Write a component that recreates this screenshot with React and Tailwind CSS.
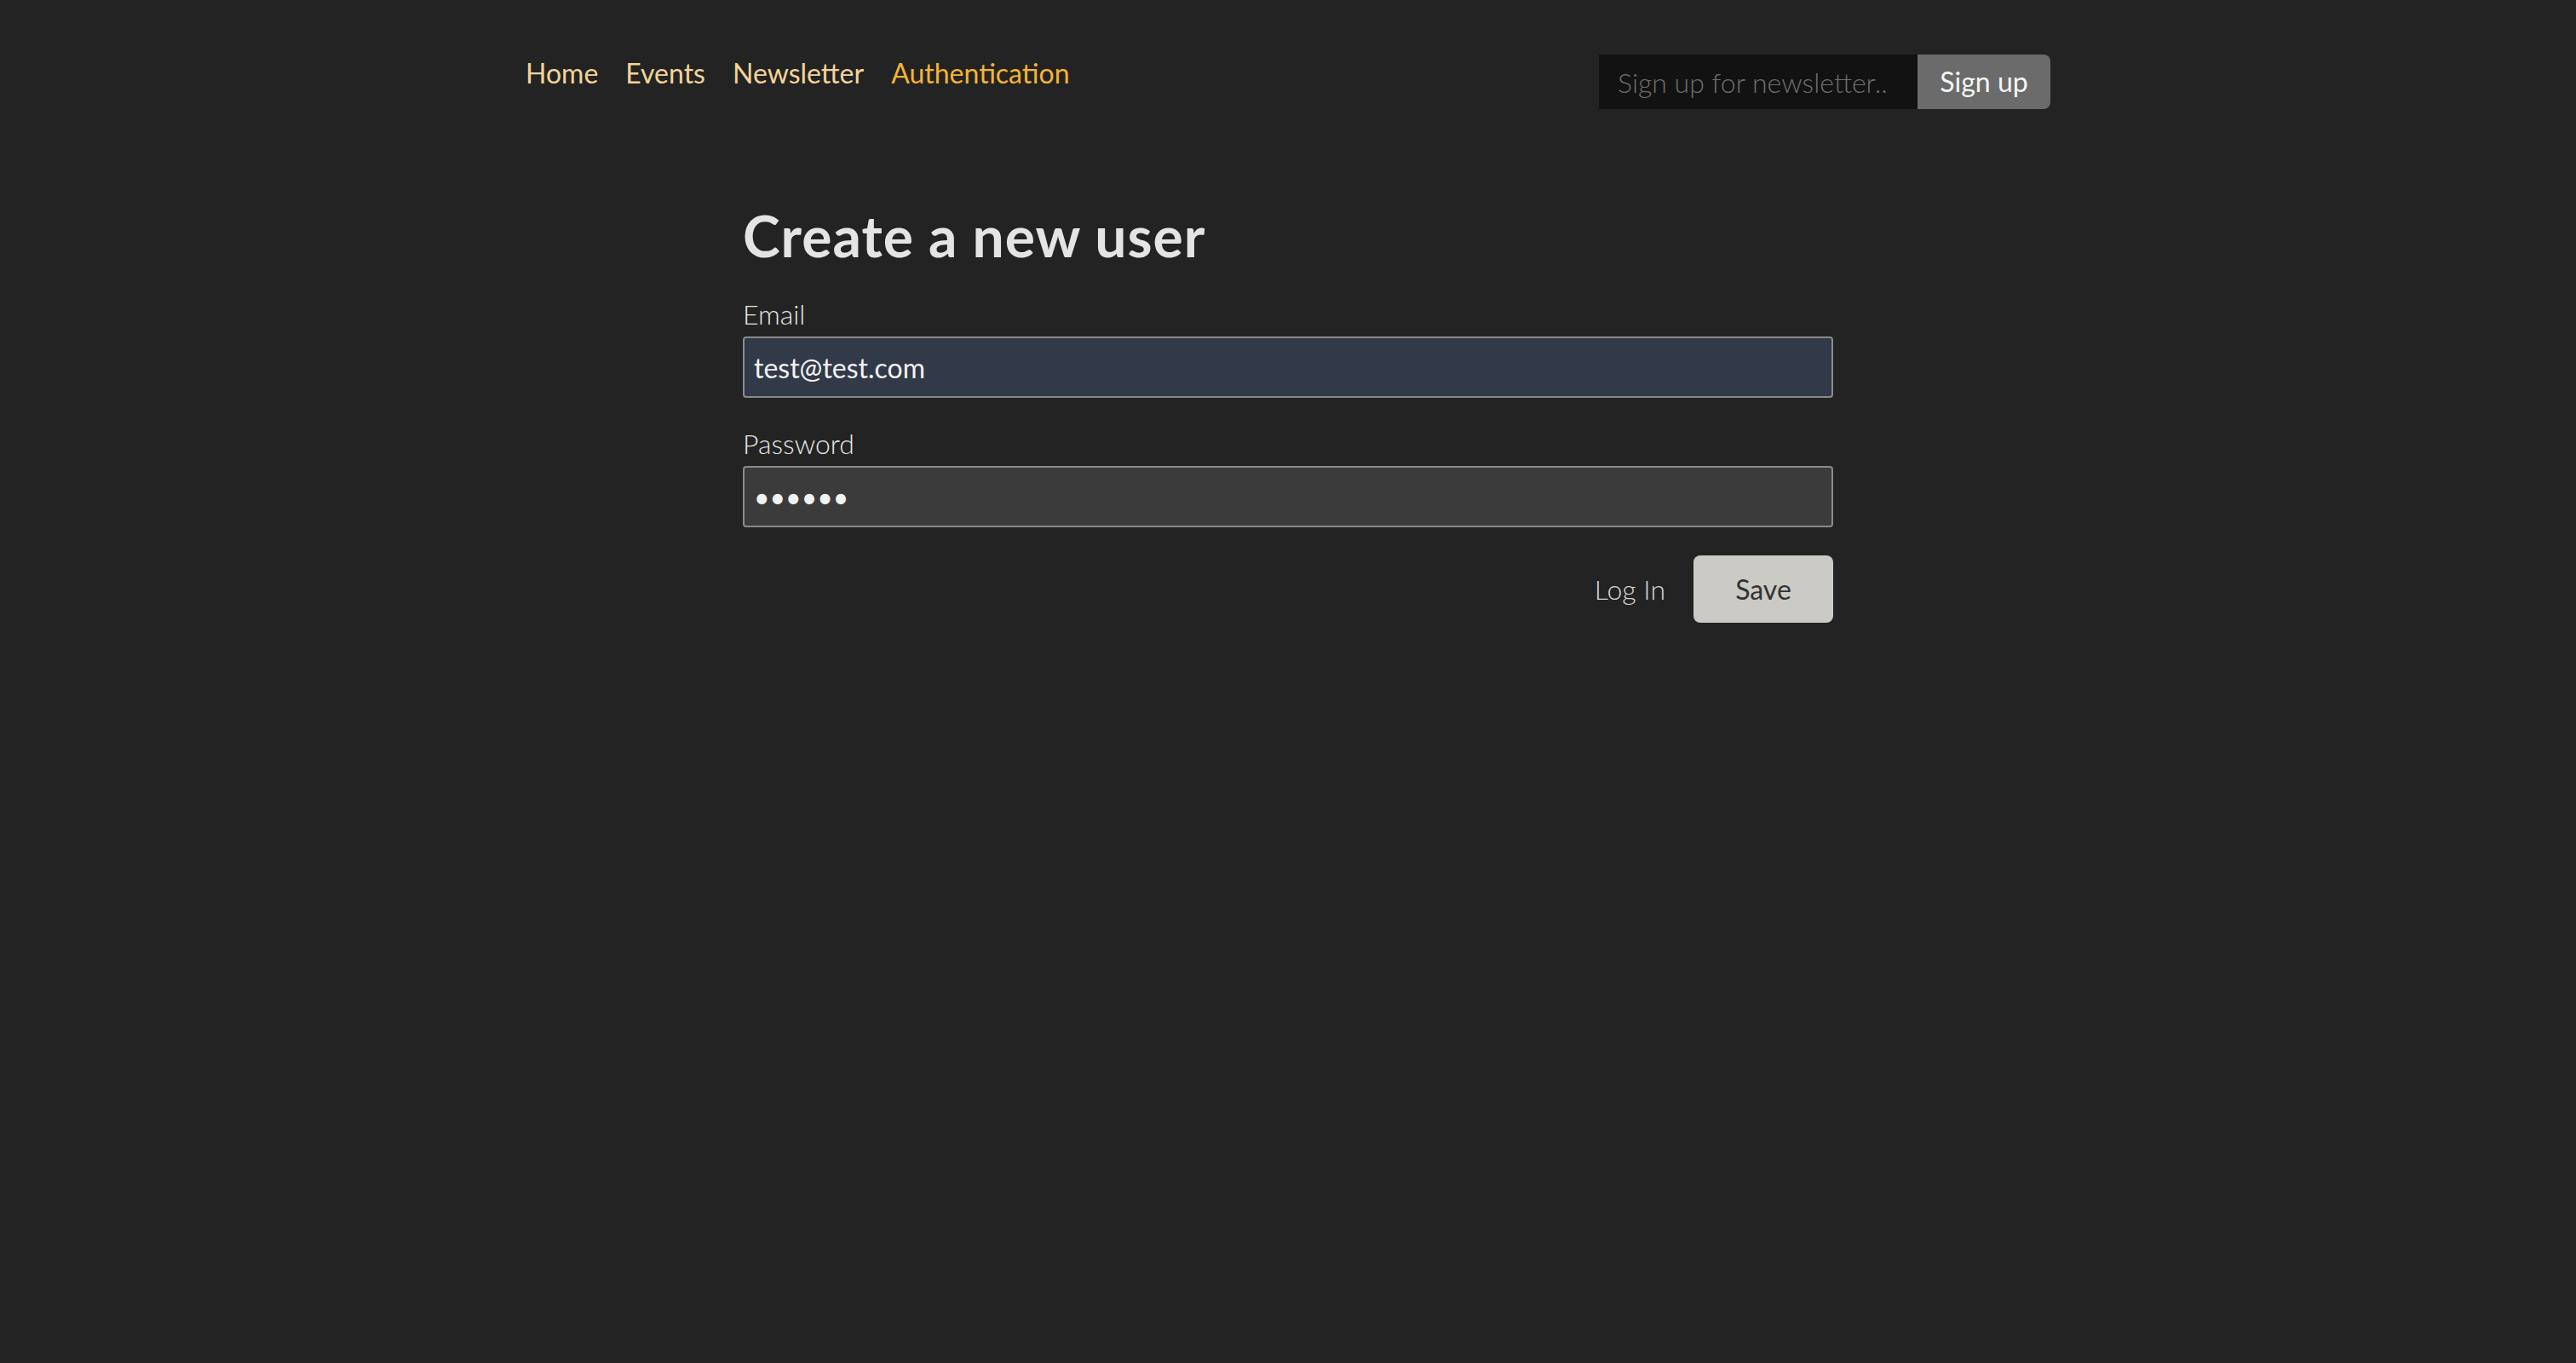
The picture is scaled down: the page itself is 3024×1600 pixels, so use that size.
import React from 'react';

const NAV = [
  { label: 'Home', active: false },
  { label: 'Events', active: false },
  { label: 'Newsletter', active: false },
  { label: 'Authentication', active: true },
];

export default function App() {
  return (
    <div className="min-h-screen bg-[#232323] font-['Lato','Noto_Sans',sans-serif] text-[#e2e2e2]">
      {/* Header */}
      <header className="mx-auto flex w-[1790px] items-start justify-between pt-[64px]">
        <nav className="mt-[2px] flex gap-[32px] text-[32px] leading-[40px]">
          {NAV.map(item => (
            <a
              key={item.label}
              href="#"
              className={item.active ? 'text-[#f5b432]' : 'text-[#f2d49a]'}
            >
              {item.label}
            </a>
          ))}
        </nav>
        <form className="flex h-[64px]" onSubmit={e => e.preventDefault()}>
          <input
            type="email"
            placeholder="Sign up for newsletter.."
            className="h-full w-[374px] bg-[#121212] px-[22px] text-[32px] font-light text-[#e2e2e2] outline-none placeholder:text-[#6e6e6e]"
          />
          <button className="h-full w-[156px] rounded-r-[8px] bg-[#6b6b6b] text-[32px] text-[#f5f5f5]">
            Sign up
          </button>
        </form>
      </header>

      {/* Form */}
      <main className="mx-auto mt-[110px] w-[1280px]">
        <h1 className="text-[66px] font-bold leading-[78px] tracking-[1px] text-[#e4e4e4]">Create a new user</h1>
        <form onSubmit={e => e.preventDefault()}>
          <label className="mt-[33px] block text-[32px] font-light leading-[40px] text-[#e6e6e6]">Email</label>
          <input
            type="email"
            defaultValue="test@test.com"
            className="mt-[6px] block h-[72px] w-full rounded-[4px] border-2 border-[#8a8a8a] bg-[#323949] px-[11px] text-[32px] text-[#f2f2f2] outline-none"
          />
          <label className="mt-[34px] block text-[32px] font-light leading-[40px] text-[#e6e6e6]">Password</label>
          <input
            type="password"
            defaultValue="secret"
            className="mt-[6px] block h-[72px] w-full rounded-[4px] border-2 border-[#8a8a8a] bg-[#3b3b3b] px-[11px] text-[32px] text-[#f2f2f2] outline-none"
          />
          <div className="mt-[33px] flex items-center justify-end gap-[33px]">
            <a href="#" className="text-[32px] font-light text-[#d6d6d6]">Log In</a>
            <button className="h-[79px] w-[164px] rounded-[8px] bg-[#cbcac5] text-[32px] text-[#333333]">
              Save
            </button>
          </div>
        </form>
      </main>
    </div>
  );
}
